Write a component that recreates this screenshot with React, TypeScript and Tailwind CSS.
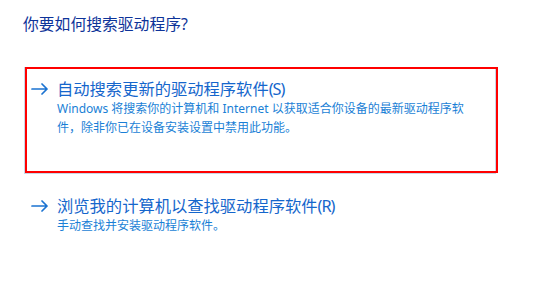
import React from 'react';

const font = { fontFamily: '"Noto Sans", "Noto Sans CJK SC", sans-serif' };

const Arrow: React.FC = () => (
  <svg width="18" height="12" viewBox="0 0 18 12" className="shrink-0">
    <path d="M1 6h15M11 1l5 5-5 5" fill="none" stroke="#1b73d1" strokeWidth="1.7" strokeLinecap="round" strokeLinejoin="round" />
  </svg>
);

interface OptionProps {
  title: string;
  keyHint: string;
  note: React.ReactNode;
  focused?: boolean;
}

const Option: React.FC<OptionProps> = ({ title, keyHint, note, focused }) => (
  <div
    className={`relative w-[472px] text-left ${
      focused ? 'h-[107px] border-x border-b border-[#c9d6e6]' : 'h-[60px]'
    }`}
  >
    {focused && <span className="absolute left-0 top-0 -right-[3px] bottom-0 border-2 border-[#ff0000]" />}
    <div className={`flex items-start pt-[12px] ${focused ? 'pl-[6px]' : 'pl-[7px]'}`}>
      <div className="h-[20px] flex items-center">
        <Arrow />
      </div>
      <div className="ml-[8px]">
        <div className="text-[16.3px] leading-[20px] text-[#1566cc] whitespace-nowrap">
          {title}
          <span className="tracking-[-1px]">({keyHint})</span>
        </div>
        <div className="w-[416px] text-[12px] leading-[19px] text-[#1a7fd6]">{note}</div>
      </div>
    </div>
  </div>
);

export default function App() {
  return (
    <div className="w-[558px] h-[284px] bg-white overflow-hidden" style={font}>
      <div className="pl-[23px] pt-[12px] text-[15.8px] leading-[24px] text-[#0d3399]">你要如何搜索驱动程序?</div>
      <div className="pl-[24px] mt-[31px] flex flex-col gap-[10px]">
        <Option
          focused
          title="自动搜索更新的驱动程序软件"
          keyHint="S"
          note="Windows 将搜索你的计算机和 Internet 以获取适合你设备的最新驱动程序软件，除非你已在设备安装设置中禁用此功能。"
        />
        <Option title="浏览我的计算机以查找驱动程序软件" keyHint="R" note="手动查找并安装驱动程序软件。" />
      </div>
    </div>
  );
}
